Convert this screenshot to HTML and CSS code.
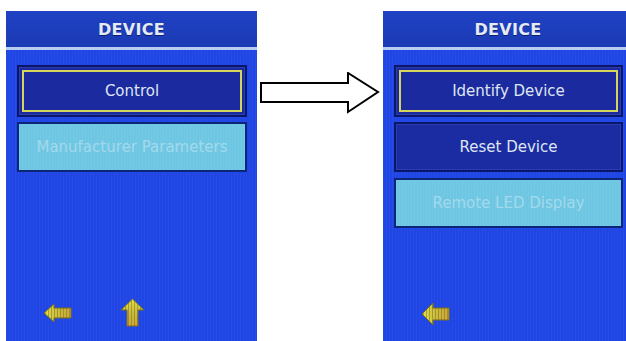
FILE: index.html
```html
<!DOCTYPE html>
<html>
<head>
<meta charset="utf-8">
<link rel="stylesheet" href="styles.css">
</head>
<body>
<svg class="defs" width="0" height="0" aria-hidden="true">
  <defs>
    <pattern id="stripeH" width="3" height="4" patternUnits="userSpaceOnUse">
      <rect width="3" height="4" fill="#e6e04a"/>
      <rect x="2" width="1" height="4" fill="#b8a838"/>
    </pattern>
    <pattern id="stripeV" width="3" height="4" patternUnits="userSpaceOnUse">
      <rect width="3" height="4" fill="#e6e04a"/>
      <rect x="2" width="1" height="4" fill="#b8a838"/>
    </pattern>
    <linearGradient id="shadeH" x1="0" x2="1" y1="0" y2="0">
      <stop offset="0" stop-color="#000" stop-opacity="0"/>
      <stop offset="1" stop-color="#a04a10" stop-opacity="0.35"/>
    </linearGradient>
    <linearGradient id="shadeV" x1="0" x2="0" y1="0" y2="1">
      <stop offset="0" stop-color="#000" stop-opacity="0"/>
      <stop offset="1" stop-color="#a04a10" stop-opacity="0.35"/>
    </linearGradient>
  </defs>
</svg>
<div class="stage">
  <section class="screen">
    <header class="hdr">DEVICE</header>
    <div class="sbody">
      <div class="btn sel"><div class="inner">Control</div></div>
      <div class="btn dis"><div class="inner">Manufacturer Parameters</div></div>
      <div class="nav nav-left">
        <svg width="29" height="20" viewBox="0 0 29 20">
          <polygon points="1,10 11,1 11,5 28,5 28,15 11,15 11,19" fill="url(#stripeH)" stroke="#76721e" stroke-width="1"/>
          <polygon points="1,10 11,1 11,5 28,5 28,15 11,15 11,19" fill="url(#shadeH)"/>
        </svg>
        <svg width="25" height="29" viewBox="0 0 25 29">
          <polygon points="12.5,1 24,12 18,12 18,28 7,28 7,12 1,12" fill="url(#stripeV)" stroke="#76721e" stroke-width="1"/>
          <polygon points="12.5,1 24,12 18,12 18,28 7,28 7,12 1,12" fill="url(#shadeV)"/>
        </svg>
      </div>
    </div>
  </section>

  <div class="flow">
    <svg width="120" height="42" viewBox="0 0 120 42">
      <polygon points="1,11 88,11 88,1 118,20 88,40 88,30 1,30" fill="#fff" stroke="#000" stroke-width="2" stroke-linejoin="miter"/>
    </svg>
  </div>

  <section class="screen">
    <header class="hdr">DEVICE</header>
    <div class="sbody">
      <div class="btn sel"><div class="inner">Identify Device</div></div>
      <div class="btn norm"><div class="inner">Reset Device</div></div>
      <div class="btn dis third"><div class="inner">Remote LED Display</div></div>
      <div class="nav nav-right">
        <svg width="29" height="24" viewBox="0 0 29 24">
          <polygon points="1,12 12,1 12,6 28,6 28,18 12,18 12,23" fill="url(#stripeH)" stroke="#76721e" stroke-width="1"/>
          <polygon points="1,12 12,1 12,6 28,6 28,18 12,18 12,23" fill="url(#shadeH)"/>
        </svg>
      </div>
    </div>
  </section>
</div>
</body>
</html>
```

FILE: styles.css
```css
html, body {
  margin: 0;
  padding: 0;
  background: #ffffff;
}

.defs {
  position: absolute;
  width: 0;
  height: 0;
}

.stage {
  display: flex;
  align-items: flex-start;
  width: 626px;
  height: 341px;
  padding: 11px 0 0 6px;
  box-sizing: border-box;
  overflow: hidden;
}

.screen {
  flex: 0 0 251px;
  width: 251px;
  height: 330px;
  display: flex;
  flex-direction: column;
}

.screen + .flow + .screen {
  flex-basis: 250px;
}

.hdr {
  height: 36px;
  background: linear-gradient(180deg, #1f42c4 0%, #1b3ab4 100%);
  border-bottom: 3px solid #b9cdf2;
  color: #e4ebf5;
  font-family: "DejaVu Sans", sans-serif;
  font-weight: bold;
  font-size: 16px;
  letter-spacing: 0.3px;
  display: flex;
  align-items: center;
  justify-content: center;
  text-shadow: 0 1px 0 #0c1f6e;
}

.sbody {
  flex: 1;
  background-color: #1f45e4;
  background-image: repeating-linear-gradient(90deg, rgba(255,255,255,0.035) 0 1px, rgba(0,0,0,0) 1px 3px);
  display: flex;
  flex-direction: column;
  padding: 15px 10px 14px 11px;
  box-sizing: border-box;
}

.btn {
  border: 2px solid #0a1768;
  box-shadow: inset 0 0 0 1px #2a3cb0;
  box-sizing: border-box;
  display: flex;
  font-family: "DejaVu Sans", sans-serif;
  font-size: 15px;
}

.btn .inner {
  flex: 1;
  display: flex;
  align-items: center;
  justify-content: center;
}

.sel {
  height: 52px;
  background: #1b2a9e;
  padding: 3px;
}

.sel .inner {
  border: 2px solid #d4d65c;
  color: #dfe6f2;
}

.norm {
  height: 50px;
  margin-top: 5px;
  background: #1b2ca2;
  color: #dfe6f2;
}

.dis {
  height: 50px;
  margin-top: 5px;
  background-color: #6dc6e2;
  background-image: repeating-linear-gradient(90deg, rgba(255,255,255,0.06) 0 1px, rgba(0,0,0,0) 1px 3px);
  border-color: #0b2578;
  box-shadow: none;
  color: #a3d9ec;
}

.third {
  margin-top: 6px;
}

.nav {
  margin-top: auto;
  display: flex;
  align-items: center;
}

.nav-left {
  padding-left: 26px;
  gap: 48px;
  height: 29px;
}

.nav-right {
  padding-left: 27px;
  height: 26px;
}

.nav svg {
  display: block;
}

.flow {
  flex: 0 0 126px;
  padding: 61px 0 0 3px;
  box-sizing: border-box;
}

.flow svg {
  display: block;
}
```
